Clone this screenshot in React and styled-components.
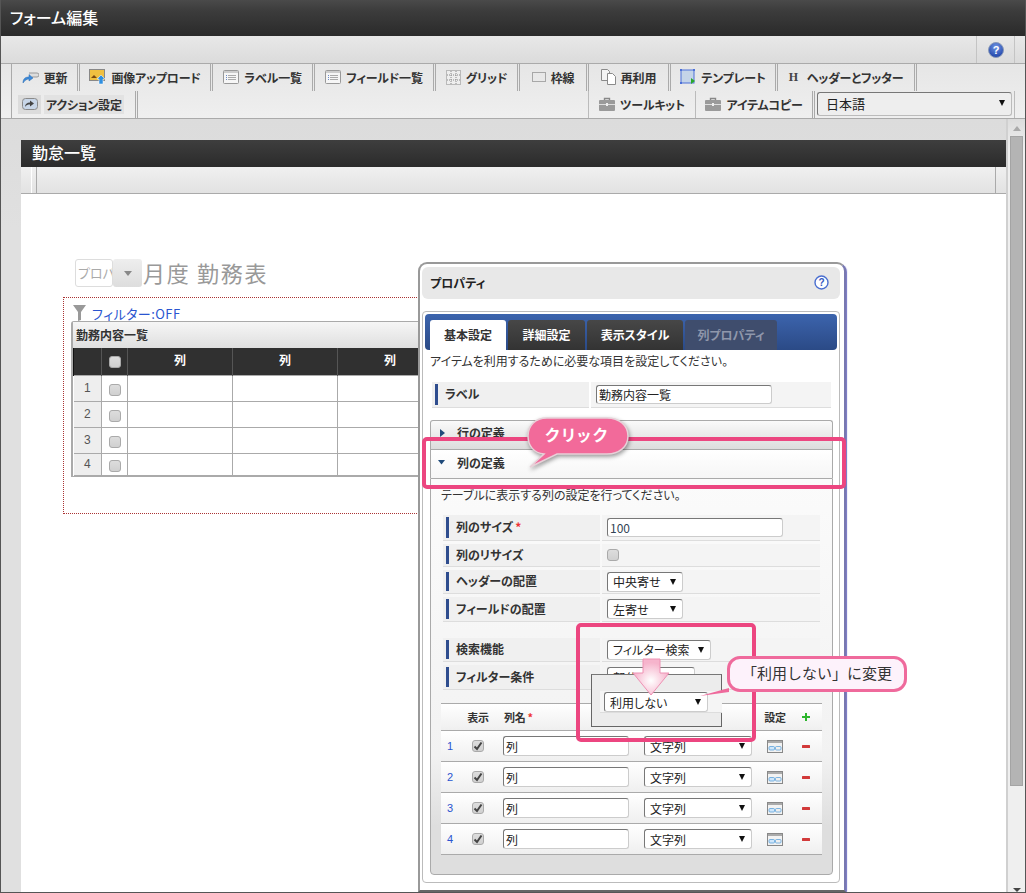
import React from 'react';
import styled, { createGlobalStyle } from 'styled-components';

const GlobalStyle = createGlobalStyle`
  html, body {
    margin: 0;
    padding: 0;
    background: #eee;
  }

  body {
    color: #333;
    font-family: "Noto Sans CJK JP", "Liberation Sans", sans-serif;
    font-feature-settings: "palt";
    font-size: 12px;
  }

  * {
    box-sizing: border-box;
  }
`;

const Page = styled.div`
  display: flex;
  flex-direction: column;
  height: 893px;
  overflow: hidden;
  position: relative;
  width: 1026px;

  &::after {
    border: 1px solid #555;
    border-top: 0;
    content: "";
    inset: 0;
    pointer-events: none;
    position: absolute;
  }
`;

const AppHeader = styled.header`
  align-items: center;
  background: linear-gradient(#4a4a4a, #3c3c3c 30%, #2a2a2a);
  color: #fff;
  display: flex;
  flex: none;
  font-size: 16px;
  font-weight: 500;
  height: 36px;
  padding: 0 0 3px 10px;
`;

const HelpBar = styled.div`
  background: linear-gradient(#e8e8e8, #dbdbdb);
  display: flex;
  flex: none;
  height: 27px;
  justify-content: flex-end;
  padding-right: 11px;
`;

const HelpCell = styled.div`
  align-items: center;
  border-left: 1px solid #c4c4c4;
  border-right: 1px solid #c4c4c4;
  display: flex;
  justify-content: center;
  width: 39px;
`;

const Toolbar = styled.nav`
  background: linear-gradient(#e6e6e6, #efefef);
  border-bottom: 1px solid #aaa;
  border-top: 1px solid #aaa;
  display: flex;
  flex: none;
  flex-direction: column;
  height: 56px;
  padding: 0 11px;
`;

const ToolRow = styled.div`
  border-right: ${p => (p.$end ? '1px solid #bbb' : '0')};
  display: flex;
  height: 27px;
`;

const Tool = styled.div`
  align-items: center;
  border-right: ${p => (p.$single ? '1px solid #bbb' : '3px double #aaa')};
  color: #333;
  display: flex;
  flex: none;
  font-weight: 700;
  gap: 5px;
  justify-content: center;
  letter-spacing: -0.2px;
  padding-bottom: 1px;
  width: ${p => p.$w}px;
`;

const FirstTool = styled(Tool)`
  border-left: 1px solid #aaa;
`;

const ActiveTool = styled(FirstTool)`
  justify-content: flex-start;
  padding-left: 6px;

  span {
    background: #e2e2e2;
    padding: 1px 2px;
  }
`;

const RightTool = styled(Tool)`
  border-left: 1px solid #bbb;
`;

const IconFace = styled.i`
  align-items: center;
  background: #dcdcdc;
  display: flex;
  height: 19px;
  justify-content: center;
  margin-right: -2px;
  width: 23px;
`;

const ToolSpacer = styled.div`
  flex: 1;
`;

const LanguageSelect = styled.div`
  align-items: center;
  background: #eee;
  border: 1px solid #bbb;
  border-radius: 3px;
  border-top-color: #777;
  border-left-color: #777;
  color: #222;
  display: flex;
  font-size: 13px;
  height: 24px;
  justify-content: space-between;
  margin: 1px 2px 0 2px;
  padding: 0 6px 2px 8px;
  width: 195px;
`;

const Workspace = styled.main`
  background: linear-gradient(#dcdcdc, #e0e0e0 110px);
  display: flex;
  flex: 1;
  min-height: 0;
  padding-left: 21px;
`;

const Window = styled.section`
  display: flex;
  flex-direction: column;
  margin-top: 21px;
  position: relative;
  width: 985px;
`;

const WindowTitle = styled.h1`
  align-items: center;
  background: linear-gradient(#3e3e3e, #2b2b2b);
  color: #fff;
  display: flex;
  flex: none;
  font-size: 16px;
  font-weight: 500;
  height: 27px;
  margin: 0;
  padding: 0 0 3px 11px;
`;

const WindowBar = styled.div`
  background: linear-gradient(#f0f0f0, #e2e2e2);
  border-bottom: 1px solid #aaa;
  display: flex;
  flex: none;
  height: 27px;
  justify-content: space-between;
  padding: 0 10px;
`;

const BarCell = styled.div`
  border-left: 1px solid #fff;
  border-right: 1px solid #aaa;
  width: 6px;
`;

const BarCellEnd = styled.div`
  border-left: 1px solid #aaa;
  width: 1px;
`;

const Canvas = styled.div`
  background: #fff;
  flex: 1;
  padding: 65px 0 0 42px;
`;

const FormTitleRow = styled.div`
  align-items: center;
  display: flex;
  height: 28px;
  margin-left: 12px;
`;

const MonthInput = styled.div`
  background: #fff;
  border: 1px solid #ddd;
  border-radius: 3px;
  color: #aaa;
  font-size: 13px;
  height: 28px;
  line-height: 26px;
  overflow: hidden;
  padding-left: 2px;
  white-space: nowrap;
  width: 38px;
`;

const MonthButton = styled.div`
  align-items: center;
  background: linear-gradient(#eee, #ddd);
  border-radius: 3px;
  display: flex;
  height: 28px;
  justify-content: center;
  width: 29px;
`;

const FormTitle = styled.span`
  color: #999;
  font-size: 22px;
  font-weight: 400;
  letter-spacing: 1.7px;
  margin: 0 0 3px 1px;
`;

const DottedArea = styled.div`
  border: 1px dotted #a33;
  height: 217px;
  margin-top: 10px;
  padding: 7px 0 0 7px;
  width: 730px;
`;

const FilterRow = styled.div`
  align-items: center;
  color: #2a55d0;
  display: flex;
  font-size: 13px;
  gap: 6px;
  height: 16px;
  letter-spacing: 0.45px;
  margin-left: 2px;
`;

const GridBox = styled.div`
  border: 1px solid #aaa;
  border-radius: 3px 3px 0 0;
  border-left-width: 2px;
  width: 716px;
`;

const GridCaption = styled.div`
  align-items: center;
  background: linear-gradient(#f6f6f6, #dfdfdf);
  color: #333;
  display: flex;
  font-weight: 700;
  height: 26px;
  padding: 0 0 2px 3px;
`;

const GridTable = styled.table`
  border-collapse: collapse;
  table-layout: fixed;
  width: 100%;
`;

const HeadCell = styled.th`
  background: #303030;
  border-left: 1px solid #111;
  border-right: 1px solid #555;
  color: #fff;
  font-size: 12px;
  font-weight: 700;
  height: 27px;
  padding: 0 0 3px;
  width: ${p => p.$w}px;
`;

const GridRow = styled.tr`
  height: 26px;

  &:last-child {
    height: 22px;
  }
`;

const NumCell = styled.td`
  background: #eee;
  border: 1px solid #aaa;
  border-left: 0;
  color: #555;
  font-family: "Liberation Sans", sans-serif;
  font-size: 12px;
  padding: 0;
  text-align: center;
`;

const DataCell = styled.td`
  border: 1px solid #aaa;
  padding: 0;
  text-align: ${p => (p.$center ? 'center' : 'left')};
`;

const Box = styled.span`
  background: linear-gradient(#ddd, #d0d0d0);
  border: 1px solid #aaa;
  border-radius: 3px;
  display: inline-flex;
  align-items: center;
  justify-content: center;
  height: 12px;
  vertical-align: middle;
  width: 12px;
`;

const Dialog = styled.aside`
  background: #fff;
  border: 2px solid #999;
  border-bottom-color: #666;
  border-radius: 9px 9px 0 0;
  border-right-color: #7878b0;
  box-shadow: 2px 1px 1px -1px #7070c0;
  display: flex;
  flex-direction: column;
  height: 630px;
  left: 397px;
  padding: 3px 4px 0 2px;
  position: absolute;
  top: 122px;
  width: 428px;
`;

const DialogTitle = styled.div`
  align-items: center;
  background: #e8e8e8;
  border-radius: 6px;
  color: #222;
  display: flex;
  flex: none;
  font-weight: 700;
  height: 32px;
  justify-content: space-between;
  padding: 0 11px 2px 8px;
`;

const DialogPanel = styled.div`
  border: 1px solid #bbb;
  border-radius: 4px;
  flex: none;
  height: 572px;
  margin-top: 12px;
  padding: 2px;
`;

const TabStrip = styled.div`
  align-items: flex-end;
  background: linear-gradient(#3c64ad, #2b4a86);
  border-radius: 4px;
  display: flex;
  gap: 2px;
  height: 36px;
  padding-left: 5px;
`;

const Tab = styled.div`
  align-items: center;
  background: ${p => (p.$active ? '#fff' : p.$dim ? '#3f4d6d' : 'linear-gradient(#474747, #333)')};
  border-radius: 3px 3px 0 0;
  color: ${p => (p.$active ? '#333' : p.$dim ? '#8f97ab' : '#fff')};
  display: flex;
  font-weight: 700;
  height: 30px;
  justify-content: center;
  padding-bottom: 2px;
  width: ${p => p.$w}px;
`;

const Intro = styled.p`
  color: #333;
  line-height: 20px;
  margin: 1px 0 0 5px;
`;

const LabelRow = styled.div`
  display: grid;
  gap: 2px;
  grid-template-columns: 157px 240px;
  height: 26px;
  margin: 11px 0 0 7px;
`;

const RowLabel = styled.div`
  align-items: center;
  background: #f0f0f0;
  border-bottom: 1px solid #ddd;
  display: flex;
  font-weight: 700;
  padding: 0 0 2px 3px;

  &::before {
    align-self: stretch;
    background: #2f4d8e;
    content: "";
    margin: 2px 7px 0 0;
    width: 3px;
  }
`;

const RowValue = styled.div`
  align-items: center;
  background: #f4f4f4;
  border-bottom: 1px solid #ddd;
  display: flex;
  padding-left: 5px;
`;

const TextInput = styled.input`
  background: #fff;
  border: 1px solid #ccc;
  border-left-color: #777;
  border-radius: 3px;
  border-top-color: #777;
  color: ${p => (p.$number ? '#345' : '#222')};
  font: inherit;
  font-feature-settings: "palt";
  height: ${p => p.$h || 19}px;
  outline: none;
  padding: 0 2px;
  width: ${p => p.$w}px;
`;

const Accordion = styled.div`
  align-items: center;
  background: ${p => (p.$open ? 'linear-gradient(#fff, #f6f6f6)' : 'linear-gradient(#fafafa, #dcdcdc)')};
  border: 1px solid #aaa;
  border-bottom: 0;
  border-radius: ${p => (p.$open ? '0' : '3px 3px 0 0')};
  display: flex;
  font-weight: 700;
  gap: 12px;
  height: 29px;
  margin: ${p => (p.$open ? '0 4px 0 5px' : '12px 4px 0 5px')};
  padding: 0 0 ${p => (p.$open ? 3 : 5)}px 7px;
`;

const AccordionBody = styled.div`
  background: linear-gradient(#fbfbfb, #f2f2f2 70%, #dedede 88%);
  border: 1px solid #aaa;
  border-radius: 0 0 4px 4px;
  height: 397px;
  margin: 0 4px 0 5px;
  padding: 7px 10px 0;
`;

const BodyIntro = styled.p`
  line-height: 18px;
  margin: 0;
`;

const FieldGroup = styled.div`
  display: flex;
  flex-direction: column;
  gap: 3px;
  margin: ${p => p.$top}px 0 0 2px;
`;

const FieldRow = styled.div`
  display: grid;
  gap: 2px;
  grid-template-columns: 157px 218px;
  height: ${p => p.$h || 25}px;
`;

const SelectBox = styled.div`
  align-items: center;
  background: #fff;
  border: 1px solid #ccc;
  border-left-color: #777;
  border-radius: 3px;
  border-top-color: #777;
  color: #222;
  display: flex;
  flex: none;
  height: 20px;
  justify-content: space-between;
  padding: 0 6px 0 5px;
  white-space: nowrap;
  width: ${p => p.$w}px;
`;

const Caret = styled.span`
  border-left: 3.5px solid transparent;
  border-right: 3.5px solid transparent;
  border-top: 6px solid #111;
  flex: none;
  height: 0;
  width: 0;
`;

const ColumnsTable = styled.div`
  margin-top: 13px;
  border-top: 1px solid #aaa;
`;

const ColumnRow = styled.div`
  align-items: center;
  background: linear-gradient(#fff, #efefef);
  border-bottom: 1px solid #aaa;
  display: grid;
  grid-template-columns: 22px 30px 151px 116px 30px 32px;
  height: ${p => (p.$head ? 27 : 31)}px;
  justify-items: center;
`;

const ColumnHead = styled.div`
  font-size: 11px;
  font-weight: 700;
  justify-self: ${p => (p.$start ? 'start' : 'center')};
  letter-spacing: -0.3px;
  margin: 0 0 1px ${p => (p.$start ? 11 : 0)}px;
`;

const Required = styled.span`
  color: #e33;
  margin-left: 2px;
`;

const RowNumber = styled.span`
  color: #2a55d0;
  font-family: "Liberation Sans", sans-serif;
  font-size: 11px;
  justify-self: start;
  margin-left: 6px;
`;

const NameCell = styled.div`
  justify-self: start;
  margin-left: 10px;
`;

const TypeCell = styled.div`
  justify-self: start;
`;

const FrameAnnotation = styled.div`
  border: 4px solid #ec4680;
  border-radius: 5px;
  height: ${p => p.$h}px;
  left: ${p => p.$x}px;
  position: absolute;
  top: ${p => p.$y}px;
  width: ${p => p.$w}px;
`;

const ClickBubble = styled.div`
  height: 58px;
  left: 525px;
  position: absolute;
  top: 414px;
  width: 110px;

  svg {
    display: block;
    filter: drop-shadow(1px 2px 2px rgba(0, 0, 0, 0.4));
  }

  span {
    color: #fff;
    font-size: 16px;
    font-weight: 700;
    left: 20px;
    letter-spacing: 2px;
    position: absolute;
    top: 8px;
  }
`;

const ZoomPopup = styled.div`
  background: #ececec;
  border: 1px solid #666;
  border-top-color: #777;
  height: 53px;
  left: 591px;
  padding: 16px 0 0 8px;
  position: absolute;
  top: 674px;
  width: 131px;
`;

const PopupBand = styled.div`
  background: #f5f5f5;
  border-bottom: 1px solid #ddd;
  height: 22px;
  margin-right: -1px;
  padding: 1px 0 0 4px;
`;

const ArrowMark = styled.svg`
  left: 630px;
  position: absolute;
  top: 657px;
`;

const NoteLine = styled.svg`
  left: 698px;
  position: absolute;
  top: 684px;
`;

const NoteBubble = styled.div`
  align-items: center;
  background: #fdf2fb;
  border: 3px solid #ef6a9c;
  border-radius: 13px;
  color: #333;
  display: flex;
  font-feature-settings: normal;
  font-size: 15px;
  height: 36px;
  justify-content: center;
  left: 727px;
  padding-bottom: 3px;
  position: absolute;
  top: 656px;
  width: 180px;
`;

const ScrollTrack = styled.div`
  align-items: center;
  background: linear-gradient(#dcdcdc, #efefef 30px);
  border-left: 2px solid #d0d0d0;
  display: flex;
  flex-direction: column;
  padding: 7px 3px 0 2px;
  width: 20px;
`;

const ScrollThumb = styled.div`
  background: #b4b4b4;
  border: 1px solid #a4a4a4;
  flex: none;
  height: 650px;
  margin-top: 5px;
  width: 13px;
`;

const ScrollUp = styled.span`
  border-bottom: 5px solid #aaa;
  border-left: 4px solid transparent;
  border-right: 4px solid transparent;
  height: 0;
  width: 0;
`;

const ScrollDown = styled.span`
  border-left: 4px solid transparent;
  border-right: 4px solid transparent;
  border-top: 4px solid #444;
  height: 0;
  margin: auto 0 1px;
  width: 0;
`;

const HelpGlossy = () => (
  <svg width="16" height="16" viewBox="0 0 16 16">
    <defs>
      <radialGradient id="gloss" cx="50%" cy="30%" r="70%">
        <stop offset="0" stopColor="#6f94e4" />
        <stop offset="1" stopColor="#1f43a8" />
      </radialGradient>
    </defs>
    <circle cx="8" cy="8" r="7.5" fill="url(#gloss)" stroke="#8a9ab8" />
    <text x="8" y="12" textAnchor="middle" fontSize="11" fontWeight="700" fill="#fff" fontFamily="Liberation Sans">?</text>
  </svg>
);

const HelpRing = () => (
  <svg width="15" height="15" viewBox="0 0 15 15">
    <circle cx="7.5" cy="7.5" r="6.5" fill="#fff" stroke="#4a6fd0" strokeWidth="1.4" />
    <text x="7.5" y="11" textAnchor="middle" fontSize="10" fontWeight="700" fill="#3358c0" fontFamily="Liberation Sans">?</text>
  </svg>
);

const UpdateIcon = () => (
  <svg width="17" height="16" viewBox="0 0 17 16">
    <path d="M7 4h8a1.500 1.500 0 0 1 0 4h-5" fill="#ddd" stroke="#999" />
    <path d="M1 14c0-5 3-6 6-6V5.500l4 3.500-4 3v-2c-2 0-4 1-6 4z" fill="#3d8ad8" stroke="#2a6ab0" strokeWidth=".5" />
  </svg>
);

const UploadIcon = () => (
  <svg width="17" height="16" viewBox="0 0 17 16">
    <rect x=".5" y=".5" width="15" height="11" fill="#f0c040" stroke="#888" />
    <path d="M2 9l3-3 3 3z" fill="#7a4a10" />
    <path d="M12 6l4 4h-2v5h-4v-5H8z" fill="#2f8fe0" stroke="#fff" strokeWidth=".5" />
  </svg>
);

const ListIcon = () => (
  <svg width="16" height="14" viewBox="0 0 16 14">
    <rect x=".5" y=".5" width="15" height="13" rx="1" fill="#f6f6f6" stroke="#999" />
    <rect x="1" y="1" width="14" height="2" fill="#ccc" />
    <path d="M3 5.500h1M3 7.500h1M3 9.500h1" stroke="#6a8ac8" />
    <path d="M5 5.500h8M5 7.500h8M5 9.500h8" stroke="#aaa" />
  </svg>
);

const GridIcon = () => (
  <svg width="15" height="15" viewBox="0 0 15 15">
    <rect x=".5" y=".5" width="14" height="14" fill="#eee" stroke="#888" strokeDasharray="1 1" />
    <path d="M5 1v13M10 1v13M1 5h13M1 10h13" stroke="#888" strokeDasharray="1 1" />
  </svg>
);

const BorderIcon = () => (
  <svg width="14" height="10" viewBox="0 0 14 10">
    <rect x=".5" y=".5" width="13" height="9" fill="none" stroke="#666" strokeDasharray="1 1" />
  </svg>
);

const CopyIcon = () => (
  <svg width="15" height="16" viewBox="0 0 15 16">
    <path d="M.5.500h6l2 2v9h-8z" fill="#f4f4f4" stroke="#8a8a8a" />
    <path d="M6.500 4.500h5l3 3v8h-8z" fill="#fff" stroke="#8a8a8a" />
  </svg>
);

const TemplateIcon = () => (
  <svg width="16" height="16" viewBox="0 0 16 16">
    <rect x="1" y="1" width="13" height="13" fill="#c4d4e8" stroke="#4c70d8" />
    <path d="M11 9l4 3-4 3z" fill="#2aa82a" />
    <rect y="0" width="2" height="2" fill="#4c70d8" />
    <rect x="13" y="0" width="2" height="2" fill="#4c70d8" />
    <rect y="13" width="2" height="2" fill="#4c70d8" />
  </svg>
);

const ToolkitIcon = () => (
  <svg width="16" height="14" viewBox="0 0 16 14">
    <path d="M5.500 3V1.500h5V3" fill="none" stroke="#888" strokeWidth="1.400" />
    <rect y="3" width="16" height="11" rx="1" fill="#9a9a9a" />
    <rect y="7" width="16" height="1" fill="#ddd" />
    <rect x="7" y="6" width="2" height="3" fill="#eee" />
  </svg>
);

const ActionIcon = () => (
  <svg width="16" height="12" viewBox="0 0 16 12">
    <rect x=".5" y=".5" width="15" height="11" rx="3" fill="#c8d6e8" stroke="#8a8a8a" />
    <path d="M3 9c0-3 2-4.500 5-4.500V2.500l4 3-4 3v-2c-2 0-4 .5-5 2.500z" fill="#444" />
  </svg>
);

const SerifH = styled.span`
  color: #444;
  font-family: "Liberation Serif", serif;
  font-size: 12px;
  font-weight: 700;
  margin-right: 4px;
`;

const Funnel = () => (
  <svg width="13" height="16" viewBox="0 0 13 16">
    <path d="M0 0h13L8 7v8l-3 1V7z" fill="#999" />
  </svg>
);

const SmallTriangle = () => (
  <svg width="8" height="5" viewBox="0 0 8 5">
    <path d="M0 0h8L4 5z" fill="#888" />
  </svg>
);

const TriangleRight = () => (
  <svg width="7" height="8" viewBox="0 0 7 8">
    <path d="M2 0l5 4-5 4z" fill="#1f4a7a" />
  </svg>
);

const TriangleDown = () => (
  <svg width="7" height="5" viewBox="0 0 7 5">
    <path d="M0 0h7L3.500 4.500z" fill="#1f4a7a" />
  </svg>
);

const CheckMark = () => (
  <svg width="10" height="10" viewBox="0 0 10 10">
    <path d="M1.500 5.500L4 8l4.500-6.500" fill="none" stroke="#444" strokeWidth="2" />
  </svg>
);

const CardIcon = () => (
  <svg width="16" height="13" viewBox="0 0 16 13">
    <rect x=".5" y=".5" width="15" height="12" fill="#f2f2f2" stroke="#888" />
    <rect x="1" y="1" width="14" height="2" fill="#aaa" />
    <rect x="2" y="6.500" width="5.500" height="3.500" rx="1" fill="#cfe6fa" stroke="#4a9ad8" strokeWidth=".7" />
    <rect x="8.500" y="6.500" width="5.500" height="3.500" rx="1" fill="#eee" stroke="#4a9ad8" strokeWidth=".7" />
  </svg>
);

const PlusIcon = () => (
  <svg width="8" height="8" viewBox="0 0 8 8">
    <path d="M3 0h2v3h3v2H5v3H3V5H0V3h3z" fill="#2cb52c" />
  </svg>
);

const MinusIcon = () => (
  <svg width="8" height="3" viewBox="0 0 8 3">
    <rect width="8" height="3" rx=".5" fill="#d23a3a" />
  </svg>
);

const gridRows = [1, 2, 3, 4];

export default function App() {
  return (
    <Page>
      <GlobalStyle />
      <AppHeader>フォーム編集</AppHeader>
      <HelpBar>
        <HelpCell><HelpGlossy /></HelpCell>
      </HelpBar>
      <Toolbar>
        <ToolRow>
          <FirstTool $w={69}><UpdateIcon />更新</FirstTool>
          <Tool $w={133}><UploadIcon />画像アップロード</Tool>
          <Tool $w={102}><ListIcon />ラベル一覧</Tool>
          <Tool $w={121}><ListIcon />フィールド一覧</Tool>
          <Tool $w={84}><GridIcon />グリッド</Tool>
          <Tool $w={69}><BorderIcon />枠線</Tool>
          <Tool $w={82}><CopyIcon />再利用</Tool>
          <Tool $w={107}><TemplateIcon />テンプレート</Tool>
          <Tool $w={139}><SerifH>H</SerifH>ヘッダーとフッター</Tool>
        </ToolRow>
        <ToolRow $end>
          <ActiveTool $w={127}><IconFace><ActionIcon /></IconFace><span>アクション設定</span></ActiveTool>
          <ToolSpacer />
          <RightTool $w={108} $single><ToolkitIcon />ツールキット</RightTool>
          <Tool $w={119}><ToolkitIcon />アイテムコピー</Tool>
          <LanguageSelect>日本語<Caret /></LanguageSelect>
        </ToolRow>
      </Toolbar>
      <Workspace>
        <Window>
          <WindowTitle>勤怠一覧</WindowTitle>
          <WindowBar>
            <BarCell />
            <BarCellEnd />
          </WindowBar>
          <Canvas>
            <FormTitleRow>
              <MonthInput>プロパ</MonthInput>
              <MonthButton><SmallTriangle /></MonthButton>
              <FormTitle>月度 勤務表</FormTitle>
            </FormTitleRow>
            <DottedArea>
              <FilterRow><Funnel />フィルター:OFF</FilterRow>
              <GridBox>
                <GridCaption>勤務内容一覧</GridCaption>
                <GridTable>
                  <thead>
                    <tr>
                      <HeadCell $w={28} />
                      <HeadCell $w={26}><Box /></HeadCell>
                      <HeadCell $w={105}>列</HeadCell>
                      <HeadCell $w={105}>列</HeadCell>
                      <HeadCell $w={105}>列</HeadCell>
                      <HeadCell />
                    </tr>
                  </thead>
                  <tbody>
                    {gridRows.map(n => (
                      <GridRow key={n}>
                        <NumCell>{n}</NumCell>
                        <DataCell $center><Box /></DataCell>
                        <DataCell />
                        <DataCell />
                        <DataCell />
                        <DataCell />
                      </GridRow>
                    ))}
                  </tbody>
                </GridTable>
              </GridBox>
            </DottedArea>
          </Canvas>
          <Dialog>
            <DialogTitle>プロパティ<HelpRing /></DialogTitle>
            <DialogPanel>
              <TabStrip>
                <Tab $active $w={76}>基本設定</Tab>
                <Tab $w={77}>詳細設定</Tab>
                <Tab $w={96}>表示スタイル</Tab>
                <Tab $dim $w={92}>列プロパティ</Tab>
              </TabStrip>
              <Intro>アイテムを利用するために必要な項目を設定してください。</Intro>
              <LabelRow>
                <RowLabel>ラベル</RowLabel>
                <RowValue><TextInput $w={176} defaultValue="勤務内容一覧" readOnly /></RowValue>
              </LabelRow>
              <Accordion><TriangleRight />行の定義</Accordion>
              <Accordion $open><TriangleDown />列の定義</Accordion>
              <AccordionBody>
                <BodyIntro>テーブルに表示する列の設定を行ってください。</BodyIntro>
                <FieldGroup $top={11}>
                  <FieldRow $h={26}>
                    <RowLabel>列のサイズ<Required>*</Required></RowLabel>
                    <RowValue><TextInput $w={176} defaultValue="100" readOnly $number /></RowValue>
                  </FieldRow>
                  <FieldRow $h={23}>
                    <RowLabel>列のリサイズ</RowLabel>
                    <RowValue><Box /></RowValue>
                  </FieldRow>
                  <FieldRow $h={24}>
                    <RowLabel>ヘッダーの配置</RowLabel>
                    <RowValue><SelectBox $w={76}>中央寄せ<Caret /></SelectBox></RowValue>
                  </FieldRow>
                  <FieldRow>
                    <RowLabel>フィールドの配置</RowLabel>
                    <RowValue><SelectBox $w={76}>左寄せ<Caret /></SelectBox></RowValue>
                  </FieldRow>
                </FieldGroup>
                <FieldGroup $top={16}>
                  <FieldRow $h={24}>
                    <RowLabel>検索機能</RowLabel>
                    <RowValue><SelectBox $w={104}>フィルター検索<Caret /></SelectBox></RowValue>
                  </FieldRow>
                  <FieldRow>
                    <RowLabel>フィルター条件</RowLabel>
                    <RowValue><SelectBox $w={88}>部分一致<Caret /></SelectBox></RowValue>
                  </FieldRow>
                </FieldGroup>
                <ColumnsTable>
                  <ColumnRow $head>
                    <span />
                    <ColumnHead>表示</ColumnHead>
                    <ColumnHead $start>列名<Required>*</Required></ColumnHead>
                    <span />
                    <ColumnHead>設定</ColumnHead>
                    <PlusIcon />
                  </ColumnRow>
                  {gridRows.map(n => (
                    <ColumnRow key={n}>
                      <RowNumber>{n}</RowNumber>
                      <Box><CheckMark /></Box>
                      <NameCell><TextInput $w={126} $h={20} defaultValue="列" readOnly /></NameCell>
                      <TypeCell><SelectBox $w={108}>文字列<Caret /></SelectBox></TypeCell>
                      <CardIcon />
                      <MinusIcon />
                    </ColumnRow>
                  ))}
                </ColumnsTable>
              </AccordionBody>
            </DialogPanel>
          </Dialog>
        </Window>
        <ScrollTrack>
          <ScrollUp />
          <ScrollThumb />
          <ScrollDown />
        </ScrollTrack>
      </Workspace>

      <FrameAnnotation $x={422} $y={437} $w={424} $h={52} />
      <FrameAnnotation $x={576} $y={623} $w={180} $h={119} />
      <ClickBubble>
        <svg width="110" height="58" viewBox="0 0 110 58">
          <path
            d="M22 4h60c12 0 21 7 21 18s-9 18-21 18H32L5 53l14-13c-10-1-16-8-16-18S10 4 22 4z"
            fill="#f26a9a"
            stroke="#e8d0d8"
            strokeWidth="1.5"
          />
        </svg>
        <span>クリック</span>
      </ClickBubble>
      <ZoomPopup>
        <PopupBand><SelectBox $w={104}>利用しない<Caret /></SelectBox></PopupBand>
      </ZoomPopup>
      <ArrowMark width="42" height="40" viewBox="0 0 42 40">
        <defs>
          <radialGradient id="arrowFill" cx="50%" cy="60%" r="50%">
            <stop offset="0" stopColor="#fff" />
            <stop offset="1" stopColor="#f6b4cc" />
          </radialGradient>
        </defs>
        <path d="M13 2h17v14h9L21 38 3 16h10z" fill="url(#arrowFill)" stroke="#ee92b4" />
      </ArrowMark>
      <NoteLine width="32" height="14" viewBox="0 0 32 14">
        <path d="M2 12l29-8v4z" fill="#ef6a9c" />
      </NoteLine>
      <NoteBubble>「利用しない」に変更</NoteBubble>
    </Page>
  );
}
